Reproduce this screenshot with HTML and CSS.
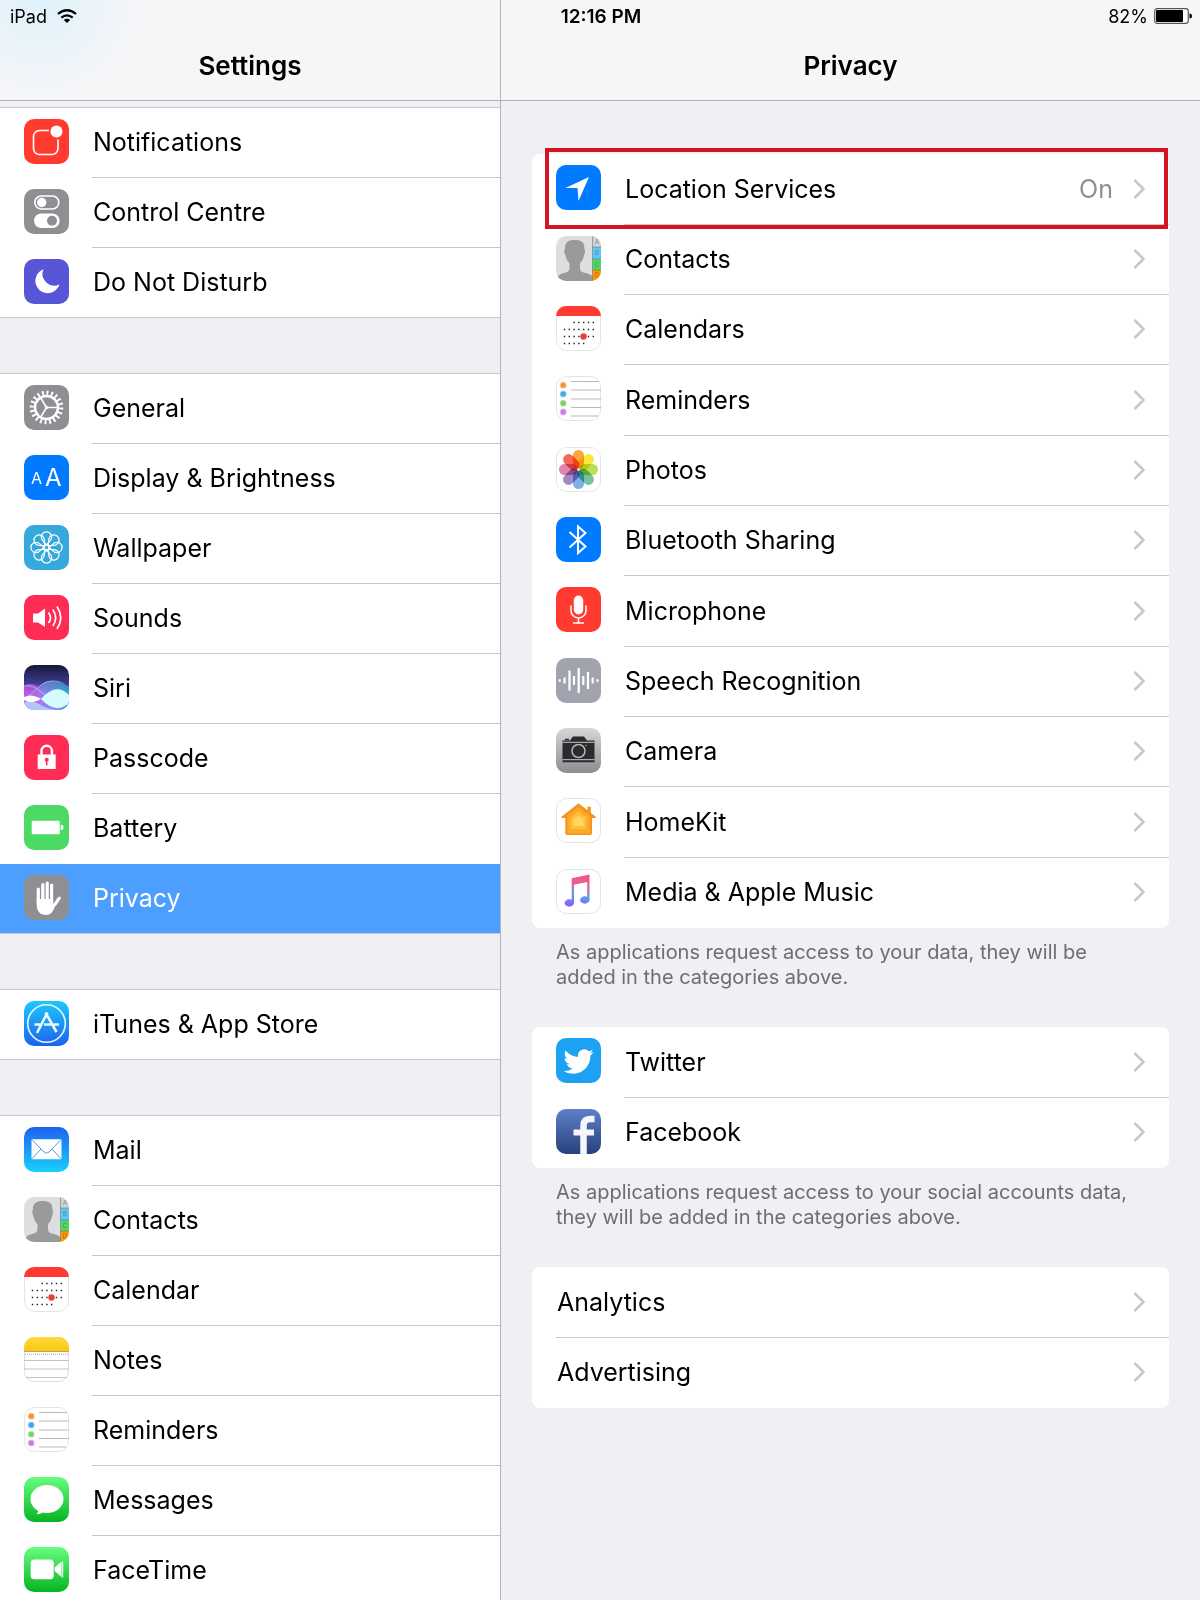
FILE: index.html
```html
<!DOCTYPE html>
<html lang="en">

<head>
    <meta charset="utf-8">
    <meta name="viewport" content="width=device-width, initial-scale=1.0">
    <title>Settings - Privacy</title>
    <link rel="stylesheet" href="styles.css">
</head>

<body>

    <!-- shared icons and gradients -->
    <svg class="defs" aria-hidden="true">
        <defs>
            <linearGradient id="g-siri" x1="0" y1="0" x2="0" y2="1">
                <stop offset="0" stop-color="#17173a" />
                <stop offset=".4" stop-color="#3d3a8e" />
                <stop offset=".7" stop-color="#6a8fe6" />
                <stop offset="1" stop-color="#5aa9e6" />
            </linearGradient>
            <linearGradient id="g-siri-wave" x1="0" y1="0" x2="1" y2="0">
                <stop offset="0" stop-color="#d63fe0" />
                <stop offset=".45" stop-color="#8d8df0" />
                <stop offset="1" stop-color="#25b9c4" />
            </linearGradient>
            <linearGradient id="g-store" x1="0" y1="0" x2="0" y2="1">
                <stop offset="0" stop-color="#1cc9fb" />
                <stop offset="1" stop-color="#1d62f0" />
            </linearGradient>
            <linearGradient id="g-mail" x1="0" y1="0" x2="0" y2="1">
                <stop offset="0" stop-color="#1d62f0" />
                <stop offset="1" stop-color="#1ad0fd" />
            </linearGradient>
            <linearGradient id="g-notes" x1="0" y1="0" x2="0" y2="1">
                <stop offset="0" stop-color="#fedb3e" />
                <stop offset="1" stop-color="#fbc612" />
            </linearGradient>
            <linearGradient id="g-green" x1="0" y1="0" x2="0" y2="1">
                <stop offset="0" stop-color="#67fd80" />
                <stop offset="1" stop-color="#08b422" />
            </linearGradient>
            <linearGradient id="g-camera" x1="0" y1="0" x2="0" y2="1">
                <stop offset="0" stop-color="#d7d7da" />
                <stop offset="1" stop-color="#8c8c91" />
            </linearGradient>
            <linearGradient id="g-music" gradientUnits="userSpaceOnUse" x1="30" y1="6" x2="22" y2="38">
                <stop offset="0" stop-color="#f6567c" />
                <stop offset=".35" stop-color="#e2609f" />
                <stop offset=".65" stop-color="#5b9bf2" />
                <stop offset="1" stop-color="#8c62f7" />
            </linearGradient>
            <linearGradient id="g-facebook" x1="0" y1="0" x2="0" y2="1">
                <stop offset="0" stop-color="#5e7fca" />
                <stop offset="1" stop-color="#28417a" />
            </linearGradient>
            <clipPath id="tile">
                <rect width="45" height="45" rx="10" />
            </clipPath>
        </defs>

        <symbol id="contacts" viewBox="0 0 45 45">
            <g clip-path="url(#tile)">
                <rect width="45" height="45" fill="#dedede" />
                <path d="M0 45C1 39 5 37.500 10 36.500C13 35.500 13.500 34 13.500 31V27C11 25 10 22 9.500 19C8 17 8 14 9 12.500C8.500 6 13 4 18.700 4S29 6 28.300 12.500C29.300 14 29.300 17 28 19C27.500 22 26.500 25 24 27V31C24 34 24.500 35.500 27.500 36.500C32 37.500 35.500 38.500 37 41V45Z" fill="#9a9a9a" />
                <rect x="36.500" width="9" height="11" fill="#d2d2d2" />
                <rect x="36.500" y="11" width="9" height="12" fill="#5ac8fa" />
                <rect x="36.500" y="23" width="9" height="11" fill="#4cd964" />
                <rect x="36.500" y="34" width="9" height="11" fill="#ff9500" />
                <path d="M36.500 0V45M36.500 11H45M36.500 23H45M36.500 34H45" stroke="#777" stroke-opacity=".6" fill="none" />
            </g>
        </symbol>

        <symbol id="calendar" viewBox="0 0 45 45">
            <rect x=".5" y=".5" width="44" height="44" rx="10" fill="#fff" stroke="#e4e4e4" />
            <path d="M0 10A10 10 0 0 1 10 0H35A10 10 0 0 1 45 10Z" fill="#ff3b30" />
            <g stroke="#222" stroke-width="1.400" stroke-dasharray="1.400 3.400">
                <path d="M17.400 16.500H38" />
                <path d="M7.800 23.500H38" />
                <path d="M7.800 30.500H38" />
                <path d="M7.800 37.500H29" />
            </g>
            <circle cx="27.500" cy="30.500" r="3.200" fill="#e8403a" />
        </symbol>

        <symbol id="reminders" viewBox="0 0 45 45">
            <rect x=".5" y=".5" width="44" height="44" rx="10" fill="#fff" stroke="#e4e4e4" />
            <path d="M15 5.500H43M15 14H45M15 23H45M15 31.500H45M15 40H42" stroke="#b9b9b9" />
            <g stroke-opacity=".5" stroke-width="2">
                <circle cx="7.200" cy="9.300" r="2.500" fill="#f09537" stroke="#f09537" />
                <circle cx="7.200" cy="18" r="2.500" fill="#3fa9e8" stroke="#3fa9e8" />
                <circle cx="7.200" cy="27.300" r="2.500" fill="#7bd35f" stroke="#7bd35f" />
                <circle cx="7.200" cy="36" r="2.500" fill="#c57fdc" stroke="#c57fdc" />
            </g>
        </symbol>

        <symbol id="chevron" viewBox="0 0 12 20">
            <path d="M1.500 1L10.500 10L1.500 19" fill="none" stroke="#c7c7cc" stroke-width="2.500" />
        </symbol>
        <path id="petal" d="M0-2.500L-4.600-8A5.200 5.200 0 1 1 4.600-8Z" />
        <rect id="leaf" x="-5.500" y="-19.500" width="11" height="18.500" rx="5.500" />
    </svg>

    <div class="statusbar">
        <div class="carrier">
            <span>iPad</span>
            <svg class="wifi" viewBox="0 0 20 14">
                <g fill="none" stroke="#000" stroke-width="2.200">
                    <path d="M1 5Q10-2.500 19 5" />
                    <path d="M4.300 8.600Q10 4 15.700 8.600" />
                </g>
                <path d="M6.800 11Q10 8.300 13.200 11L10 14Z" />
            </svg>
        </div>
        <time>12:16 PM</time>
        <div class="power">
            <span>82%</span>
            <svg class="battery" viewBox="0 0 38 16">
                <rect x=".7" y=".7" width="33.600" height="14.600" rx="2.500" fill="#fff" stroke="#555" stroke-width="1.200" />
                <rect x="2" y="2" width="27" height="12" rx="1" />
                <path d="M35.500 5.500Q38 5.500 38 8T35.500 10.500Z" />
            </svg>
        </div>
    </div>

    <nav class="sidebar">
        <header class="bar">
            <h1>Settings</h1>
        </header>

        <div class="menu">
            <ul class="group">
                <li><a class="row" href="#notifications">
                    <svg class="icon" viewBox="0 0 45 45">
                        <rect width="45" height="45" rx="10" fill="#ff3b30" />
                        <path d="M25 11.500H15.500a6 6 0 0 0-6 6V29.500a6 6 0 0 0 6 6H28a6 6 0 0 0 6-6V20.500" fill="none" stroke="#fff" stroke-width="1.600" />
                        <circle cx="32.500" cy="12.500" r="6" fill="#fff" />
                    </svg>
                    <span class="label">Notifications</span></a></li>
                <li><a class="row" href="#control-centre">
                    <svg class="icon" viewBox="0 0 45 45">
                        <rect width="45" height="45" rx="10" fill="#8e8e93" />
                        <rect x="10.800" y="7" width="24" height="13" rx="6.500" fill="none" stroke="#fff" stroke-width="1.600" />
                        <circle cx="17.700" cy="13.500" r="4.700" fill="#fff" />
                        <rect x="10" y="24.500" width="25.600" height="14.500" rx="7.200" fill="#fff" />
                        <circle cx="28" cy="31.700" r="5" fill="#8e8e93" />
                    </svg>
                    <span class="label">Control Centre</span></a></li>
                <li><a class="row" href="#do-not-disturb">
                    <svg class="icon" viewBox="0 0 45 45">
                        <rect width="45" height="45" rx="10" fill="#5856d6" />
                        <path d="M19.500 10.300A12.300 12.300 0 1 0 35.500 25.200A11.600 11.600 0 0 1 19.500 10.300Z" fill="#fff" />
                    </svg>
                    <span class="label">Do Not Disturb</span></a></li>
            </ul>

            <ul class="group">
                <li><a class="row" href="#general">
                    <svg class="icon" viewBox="0 0 45 45">
                        <rect width="45" height="45" rx="10" fill="#8e8e93" />
                        <g fill="none" stroke="#fff">
                            <circle cx="22.500" cy="22.500" r="11.500" stroke-width="2.400" />
                            <circle cx="22.500" cy="22.500" r="14.500" stroke-width="4.600" pathLength="60" stroke-dasharray="1.300 1.700" />
                            <path d="M22.500 22.500H34M22.500 22.500L16.500 12.500M22.500 22.500L16.500 32.500" stroke-width="1.500" />
                        </g>
                        <circle cx="22.500" cy="22.500" r="1.800" fill="#fff" />
                    </svg>
                    <span class="label">General</span></a></li>
                <li><a class="row" href="#display">
                    <svg class="icon" viewBox="0 0 45 45">
                        <rect width="45" height="45" rx="10" fill="#007aff" />
                        <g class="letters">
                            <text x="7" y="29" font-size="16">A</text>
                            <text x="21" y="31" font-size="24">A</text>
                        </g>
                    </svg>
                    <span class="label">Display &amp; Brightness</span></a></li>
                <li><a class="row" href="#wallpaper">
                    <svg class="icon" viewBox="0 0 45 45">
                        <rect width="45" height="45" rx="10" fill="#36a9dc" />
                        <g transform="translate(22.500 22.500)" fill="none" stroke="#fff" stroke-width="1.200">
                            <use href="#petal" />
                            <use href="#petal" transform="rotate(45)" />
                            <use href="#petal" transform="rotate(90)" />
                            <use href="#petal" transform="rotate(135)" />
                            <use href="#petal" transform="rotate(180)" />
                            <use href="#petal" transform="rotate(225)" />
                            <use href="#petal" transform="rotate(270)" />
                            <use href="#petal" transform="rotate(315)" />
                            <circle r="2.500" />
                        </g>
                    </svg>
                    <span class="label">Wallpaper</span></a></li>
                <li><a class="row" href="#sounds">
                    <svg class="icon" viewBox="0 0 45 45">
                        <rect width="45" height="45" rx="10" fill="#ff2d55" />
                        <path d="M9 18.500H14L21 13.500V32L14 27.500H9Z" fill="#fff" />
                        <g fill="none" stroke="#fff" stroke-width="1.700">
                            <path d="M24.500 17.500Q28.500 22.800 24.500 28" />
                            <path d="M28.800 14.500Q34.500 22.800 28.800 31" />
                            <path d="M33 11.500Q40.500 22.800 33 34" />
                        </g>
                    </svg>
                    <span class="label">Sounds</span></a></li>
                <li><a class="row" href="#siri">
                    <svg class="icon" viewBox="0 0 45 45">
                        <g clip-path="url(#tile)">
                            <rect width="45" height="45" fill="url(#g-siri)" />
                            <path d="M0 21Q8 16 17 24T45 38V45H0Z" fill="#e04be8" fill-opacity=".7" />
                            <path d="M0 33C10 30 16 15 28 16S40 22 45 24V45H0Z" fill="url(#g-siri-wave)" fill-opacity=".7" />
                            <path d="M0 21Q8 19 17 27T45 40M0 33C10 30 16 16 28 16S40 21 45 23" fill="none" stroke="#79e4ea" stroke-opacity=".7" />
                            <path d="M0 37Q10 35 17 40T38 45H0Z" fill="#b4c4f8" />
                            <path d="M0 32Q8 28 17 34Q8 40 0 35Z" fill="#fff" />
                            <path d="M17 34Q32 17 45 30V38Q32 50 17 34Z" fill="#d4fbff" />
                        </g>
                    </svg>
                    <span class="label">Siri</span></a></li>
                <li><a class="row" href="#passcode">
                    <svg class="icon" viewBox="0 0 45 45">
                        <rect width="45" height="45" rx="10" fill="#ff2d55" />
                        <rect x="13.700" y="19.500" width="18" height="14.500" fill="#fff" />
                        <path d="M17.500 20V16a5.200 5.200 0 0 1 10.400 0V20" fill="none" stroke="#fff" stroke-width="2.400" />
                        <circle cx="22.700" cy="24.800" r="2" fill="#ff2d55" />
                        <path d="M22.700 25V30.500" stroke="#ff2d55" stroke-width="1.500" />
                    </svg>
                    <span class="label">Passcode</span></a></li>
                <li><a class="row" href="#battery">
                    <svg class="icon" viewBox="0 0 45 45">
                        <rect width="45" height="45" rx="10" fill="#4cd964" />
                        <rect x="7.700" y="15.700" width="28" height="13.500" rx="1" fill="#fff" />
                        <path d="M36.700 19.700Q39.500 20 39.500 22.500T36.700 25.300Z" fill="#fff" />
                    </svg>
                    <span class="label">Battery</span></a></li>
                <li><a class="row selected" href="#privacy" aria-current="page">
                    <svg class="icon" viewBox="0 0 45 45">
                        <rect width="45" height="45" rx="10" fill="#8e8e93" />
                        <g fill="none" stroke="#fff" stroke-width="3.200" stroke-linecap="round">
                            <path d="M14.300 14V28M18.800 9.500V26M23.200 8V26M27.600 10V26" />
                            <path d="M29 31C32 30 33 25 35.300 23.300" />
                        </g>
                        <path d="M12.700 24H29.200V29L31 30C30 35 27.500 40 22 40C16 40 12.700 36 12.700 30Z" fill="#fff" />
                    </svg>
                    <span class="label">Privacy</span></a></li>
            </ul>

            <ul class="group">
                <li><a class="row" href="#store">
                    <svg class="icon" viewBox="0 0 45 45">
                        <rect width="45" height="45" rx="10" fill="url(#g-store)" />
                        <g fill="none" stroke="#e9fbff">
                            <circle cx="22.500" cy="22.500" r="18.800" stroke-width="1.600" />
                            <path d="M23.500 11.500L13 32M21.500 11.500L32.500 31" stroke-width="2.600" />
                            <path d="M10.500 23.500H18M20 23.500H27M29.500 23.500H35" stroke-width="2.400" />
                        </g>
                    </svg>
                    <span class="label">iTunes &amp; App Store</span></a></li>
            </ul>

            <ul class="group">
                <li><a class="row" href="#mail">
                    <svg class="icon" viewBox="0 0 45 45">
                        <rect width="45" height="45" rx="10" fill="url(#g-mail)" />
                        <rect x="7.500" y="12.200" width="30" height="20" rx="1" fill="#fff" />
                        <path d="M8 12.700L20 25Q22.500 27.500 25 25L37 12.700M8 31.700L17 22M37 31.700L28 22" fill="none" stroke="#3d8fd8" stroke-width=".9" />
                    </svg>
                    <span class="label">Mail</span></a></li>
                <li><a class="row" href="#contacts-app">
                    <svg class="icon" viewBox="0 0 45 45">
                        <use href="#contacts" />
                        <g class="tabs">
                            <text x="41" y="8">A</text>
                            <text x="41" y="19">B</text>
                            <text x="41" y="31">C</text>
                            <text x="41" y="41">D</text>
                        </g>
                    </svg>
                    <span class="label">Contacts</span></a></li>
                <li><a class="row" href="#calendar-app">
                    <svg class="icon"><use href="#calendar" /></svg>
                    <span class="label">Calendar</span></a></li>
                <li><a class="row" href="#notes">
                    <svg class="icon" viewBox="0 0 45 45">
                        <rect x=".5" y=".5" width="44" height="44" rx="10" fill="#fff" stroke="#dcdcdc" />
                        <path d="M0 14V10A10 10 0 0 1 10 0H35A10 10 0 0 1 45 10V14Z" fill="url(#g-notes)" />
                        <path d="M0 14.500H45" stroke="#b9a566" />
                        <path d="M1 17.300H44" stroke="#aaa" stroke-dasharray="1 1" />
                        <path d="M0 23.500H45M0 32H45M2 40.500H43" stroke="#c4c4c4" />
                    </svg>
                    <span class="label">Notes</span></a></li>
                <li><a class="row" href="#reminders-app">
                    <svg class="icon"><use href="#reminders" /></svg>
                    <span class="label">Reminders</span></a></li>
                <li><a class="row" href="#messages">
                    <svg class="icon" viewBox="0 0 45 45">
                        <rect width="45" height="45" rx="10" fill="url(#g-green)" />
                        <ellipse cx="23" cy="22" rx="16.500" ry="14" fill="#fff" />
                        <path d="M13 31Q15.500 35 12.300 37.300Q17 37.500 20 34Z" fill="#fff" />
                    </svg>
                    <span class="label">Messages</span></a></li>
                <li><a class="row" href="#facetime">
                    <svg class="icon" viewBox="0 0 45 45">
                        <rect width="45" height="45" rx="10" fill="url(#g-green)" />
                        <rect x="6.700" y="12.500" width="23" height="19.700" rx="3.500" fill="#fff" />
                        <path d="M30.700 20.500L37.500 14.500V30L30.700 24Z" fill="#fff" />
                        <path d="M38.700 14.500V30.500" stroke="#fff" />
                    </svg>
                    <span class="label">FaceTime</span></a></li>
            </ul>
        </div>
    </nav>

    <main class="detail">
        <header class="bar">
            <h2>Privacy</h2>
        </header>

        <div class="content">
            <ul class="card">
                <li><a class="row highlighted" href="#location">
                    <svg class="icon" viewBox="0 0 45 45">
                        <rect width="45" height="45" rx="10" fill="#007aff" />
                        <path d="M33 12L9.500 23H21.500L22.500 36Z" fill="#fff" />
                    </svg>
                    <span class="label">Location Services <span class="value">On</span><svg class="chevron"><use href="#chevron" /></svg></span></a></li>
                <li><a class="row" href="#contacts-access">
                    <svg class="icon" viewBox="0 0 45 45">
                        <use href="#contacts" />
                        <g class="tabs">
                            <text x="41" y="8">A</text>
                            <text x="41" y="19">B</text>
                            <text x="41" y="31">C</text>
                            <text x="41" y="41">D</text>
                        </g>
                    </svg>
                    <span class="label">Contacts <svg class="chevron"><use href="#chevron" /></svg></span></a></li>
                <li><a class="row" href="#calendars-access">
                    <svg class="icon"><use href="#calendar" /></svg>
                    <span class="label">Calendars <svg class="chevron"><use href="#chevron" /></svg></span></a></li>
                <li><a class="row" href="#reminders-access">
                    <svg class="icon"><use href="#reminders" /></svg>
                    <span class="label">Reminders <svg class="chevron"><use href="#chevron" /></svg></span></a></li>
                <li><a class="row" href="#photos">
                    <svg class="icon" viewBox="0 0 45 45">
                        <rect x=".5" y=".5" width="44" height="44" rx="10" fill="#fff" stroke="#e4e4e4" />
                        <g class="petals" transform="translate(22.500 22.500)">
                            <use href="#leaf" fill="#f9a63a" />
                            <use href="#leaf" fill="#f7e83a" transform="rotate(45)" />
                            <use href="#leaf" fill="#bfdc55" transform="rotate(90)" />
                            <use href="#leaf" fill="#72c4a0" transform="rotate(135)" />
                            <use href="#leaf" fill="#7db2e4" transform="rotate(180)" />
                            <use href="#leaf" fill="#a288c6" transform="rotate(225)" />
                            <use href="#leaf" fill="#dc86b0" transform="rotate(270)" />
                            <use href="#leaf" fill="#f4675a" transform="rotate(315)" />
                        </g>
                    </svg>
                    <span class="label">Photos <svg class="chevron"><use href="#chevron" /></svg></span></a></li>
                <li><a class="row" href="#bluetooth">
                    <svg class="icon" viewBox="0 0 45 45">
                        <rect width="45" height="45" rx="10" fill="#007aff" />
                        <path d="M13.500 15L29.500 29.500L22 36V9.500L29.500 16L13.500 30.500" fill="none" stroke="#fff" stroke-width="2" />
                    </svg>
                    <span class="label">Bluetooth Sharing <svg class="chevron"><use href="#chevron" /></svg></span></a></li>
                <li><a class="row" href="#microphone">
                    <svg class="icon" viewBox="0 0 45 45">
                        <rect width="45" height="45" rx="10" fill="#ff3b30" />
                        <rect x="17.800" y="8.500" width="9.400" height="19" rx="4.700" fill="#fff" />
                        <path d="M15 18.500V23.500a7.500 7.500 0 0 0 15 0V18.500M22.500 31V36M17 36H28" fill="none" stroke="#fff" stroke-width="1.500" />
                    </svg>
                    <span class="label">Microphone <svg class="chevron"><use href="#chevron" /></svg></span></a></li>
                <li><a class="row" href="#speech">
                    <svg class="icon" viewBox="0 0 45 45">
                        <rect width="45" height="45" rx="10" fill="#a1a4ae" />
                        <path d="M3.700 21.200V23.800M8.500 19.500V25.500M13.500 12.500V32.500M18 18V27M22.700 10V35M27.300 18V27M32 14V31M36.700 19.500V25.500M41.500 21.200V23.800" stroke="#fff" stroke-width="2.200" />
                    </svg>
                    <span class="label">Speech Recognition <svg class="chevron"><use href="#chevron" /></svg></span></a></li>
                <li><a class="row" href="#camera">
                    <svg class="icon" viewBox="0 0 45 45">
                        <rect width="45" height="45" rx="10" fill="url(#g-camera)" />
                        <path d="M6.500 12.500H14L17 8.500H28L31 12.500H38.500V34.300H6.500Z" fill="#2b2b2d" />
                        <path d="M9 11.500H13" stroke="#2b2b2d" stroke-width="1.500" />
                        <path d="M6.500 14.300H38.500M6.500 31.700H38.500" stroke="#c9c9cc" />
                        <circle cx="22.500" cy="23" r="8" fill="#2b2b2d" />
                        <circle cx="22.500" cy="23" r="6.500" fill="none" stroke="#b8b8bb" stroke-width="1.500" />
                        <circle cx="30" cy="17.500" r=".7" fill="#f0b040" />
                    </svg>
                    <span class="label">Camera <svg class="chevron"><use href="#chevron" /></svg></span></a></li>
                <li><a class="row" href="#homekit">
                    <svg class="icon" viewBox="0 0 45 45">
                        <rect x=".5" y=".5" width="44" height="44" rx="10" fill="#fff" stroke="#e4e4e4" />
                        <path d="M22.500 5.300L31.500 12.300V8.700H34.800V15L39.700 18.800V20H36V35Q36 37 34 37H11.300Q9.300 37 9.300 35V20H5.500V18.800Z" fill="#f5931e" />
                        <path d="M22.500 9L34 18V34.500Q34 35.500 33 35.500H12.300Q11.300 35.500 11.300 34.500V18Z" fill="#fbaa25" />
                        <path d="M22.500 13.500L30.500 19.500V31H14.500V19.500Z" fill="#fdbf3c" />
                        <path d="M22.500 17.500L27.500 21.500V28H17.500V21.500Z" fill="#ffd65f" />
                    </svg>
                    <span class="label">HomeKit <svg class="chevron"><use href="#chevron" /></svg></span></a></li>
                <li><a class="row" href="#media">
                    <svg class="icon" viewBox="0 0 45 45">
                        <rect x=".5" y=".5" width="44" height="44" rx="10" fill="#fff" stroke="#e4e4e4" />
                        <g fill="url(#g-music)">
                            <path d="M15.700 9.300L33.500 5.500V31H31.200V13L18 15.800V34H15.700Z" />
                            <ellipse cx="13.300" cy="34" rx="4.700" ry="3.700" />
                            <ellipse cx="28.800" cy="31" rx="4.700" ry="3.700" />
                        </g>
                    </svg>
                    <span class="label">Media &amp; Apple Music <svg class="chevron"><use href="#chevron" /></svg></span></a></li>
            </ul>
            <p class="note">As applications request access to your data, they will be added in the categories above.</p>

            <ul class="card">
                <li><a class="row" href="#twitter">
                    <svg class="icon" viewBox="0 0 45 45">
                        <rect width="45" height="45" rx="10" fill="#1da1f2" />
                        <path transform="translate(7.500 8.500) scale(1.250)" fill="#fff" d="M23.953 4.570a10 10 0 0 1-2.825.775 4.958 4.958 0 0 0 2.163-2.723c-.951.555-2.005.959-3.127 1.184a4.920 4.920 0 0 0-8.384 4.482C7.690 8.095 4.067 6.130 1.640 3.162a4.822 4.822 0 0 0-.666 2.475c0 1.710.870 3.213 2.188 4.096a4.904 4.904 0 0 1-2.228-.616v.060a4.923 4.923 0 0 0 3.946 4.827 4.996 4.996 0 0 1-2.212.085 4.936 4.936 0 0 0 4.604 3.417 9.867 9.867 0 0 1-6.102 2.105c-.390 0-.779-.023-1.170-.067a13.995 13.995 0 0 0 7.557 2.209c9.053 0 13.998-7.496 13.998-13.985 0-.210 0-.420-.015-.630A9.935 9.935 0 0 0 24 4.590z" />
                    </svg>
                    <span class="label">Twitter <svg class="chevron"><use href="#chevron" /></svg></span></a></li>
                <li><a class="row" href="#facebook">
                    <svg class="icon" viewBox="0 0 45 45">
                        <rect width="45" height="45" rx="10" fill="url(#g-facebook)" />
                        <g fill="none" stroke="#f4f6fb">
                            <path d="M27.500 45V17Q27.500 10 34 10H38.500" stroke-width="6.500" />
                            <path d="M17.500 23.500H38" stroke-width="6" />
                        </g>
                    </svg>
                    <span class="label">Facebook <svg class="chevron"><use href="#chevron" /></svg></span></a></li>
            </ul>
            <p class="note">As applications request access to your social accounts data, they will be added in the categories above.</p>

            <ul class="card">
                <li><a class="row" href="#analytics"><span class="label">Analytics <svg class="chevron"><use href="#chevron" /></svg></span></a></li>
                <li><a class="row" href="#advertising"><span class="label">Advertising <svg class="chevron"><use href="#chevron" /></svg></span></a></li>
            </ul>
        </div>
    </main>

</body>

</html>
```
FILE: styles.css
```css
* {
    box-sizing: border-box;
}

body {
    margin: 0;
    display: grid;
    grid-template-columns: 5fr 7fr;
    height: 100vh;
    overflow: hidden;
    background-color: #efeff4;
    color: #000;
    font-family: Inter, "Liberation Sans", sans-serif;
    font-size: 25px;
}

ul {
    list-style: none;
    margin: 0;
    padding: 0;
}

a {
    color: inherit;
    text-decoration: none;
}

.defs {
    position: absolute;
    width: 0;
    height: 0;
}

/* status bar lies over both headers */
.statusbar {
    position: absolute;
    top: 0;
    left: 0;
    right: 0;
    display: grid;
    grid-template-columns: 1fr auto 1fr;
    align-items: center;
    height: 32px;
    padding: 0 8px 0 10px;
    font-size: 18px;
}

.statusbar time {
    font-size: 19px;
    font-weight: 600;
}

.carrier,
.power {
    display: flex;
    align-items: center;
    gap: 10px;
}

.power {
    justify-content: flex-end;
    gap: 6px;
}

.wifi {
    width: 20px;
    height: 14px;
}

.battery {
    width: 38px;
    height: 16px;
}

.sidebar,
.detail {
    display: flex;
    flex-direction: column;
    min-width: 0;
    min-height: 0;
}

.detail {
    border-left: 1px solid #b4b4b9;
}

.bar {
    flex: none;
    height: 101px;
    padding-top: 32px;
    background-color: #f6f6f8;
    border-bottom: 1px solid #b0b0b5;
}

.sidebar .bar {
    background-image: radial-gradient(circle at 40px 0, #dff1fb, rgba(246, 246, 248, 0) 100px);
}

.bar h1,
.bar h2 {
    margin: 0;
    font-size: 26px;
    font-weight: 600;
    line-height: 68px;
    text-align: center;
}

.menu,
.content {
    flex: 1;
    overflow-y: auto;
    scrollbar-width: none;
}

.menu {
    padding-top: 6px;
}

.group {
    margin-bottom: 55px;
    background-color: #fff;
    border-top: 1px solid #c8c7cc;
}

.row {
    position: relative;
    display: flex;
    gap: 23px;
    height: 70px;
    padding-left: 24px;
}

.icon {
    flex: none;
    width: 45px;
    height: 45px;
    margin-top: 11px;
}

.label {
    flex: 1;
    display: flex;
    align-items: center;
    padding-bottom: 1px;
    padding-left: 1px;
    border-bottom: 1px solid #c8c7cc;
    white-space: nowrap;
}

.group li:last-child .row {
    border-bottom: 1px solid #c8c7cc;
}

li:last-child .label,
li:has(+ li .selected) .label {
    border-bottom-color: transparent;
}

.group .selected {
    background-color: #4c9eff;
    color: #fff;
}

.letters {
    fill: #fff;
}

.tabs {
    fill: #555;
    fill-opacity: .6;
    font-size: 6px;
    text-anchor: middle;
}

.petals,
.petals use {
    mix-blend-mode: multiply;
}

.content {
    padding: 53px 31px 40px;
}

.card {
    background-color: #fff;
    border-radius: 8px;
}

.card li:nth-child(3n+1) .row {
    height: 71px;
}

.card .label {
    padding-right: 24px;
}

.chevron {
    width: 12px;
    height: 20px;
    margin-left: auto;
}

.value {
    margin-left: auto;
    color: #8e8e93;
}

.value + .chevron {
    margin-left: 20px;
}

.highlighted::after {
    content: "";
    position: absolute;
    inset: -6px 1px -4px 13px;
    border: 4px solid #d4141f;
}

.note {
    margin: 0;
    padding: 12px 24px 37px;
    color: #6d6d72;
    font-size: 20px;
    line-height: 25px;
}
```
